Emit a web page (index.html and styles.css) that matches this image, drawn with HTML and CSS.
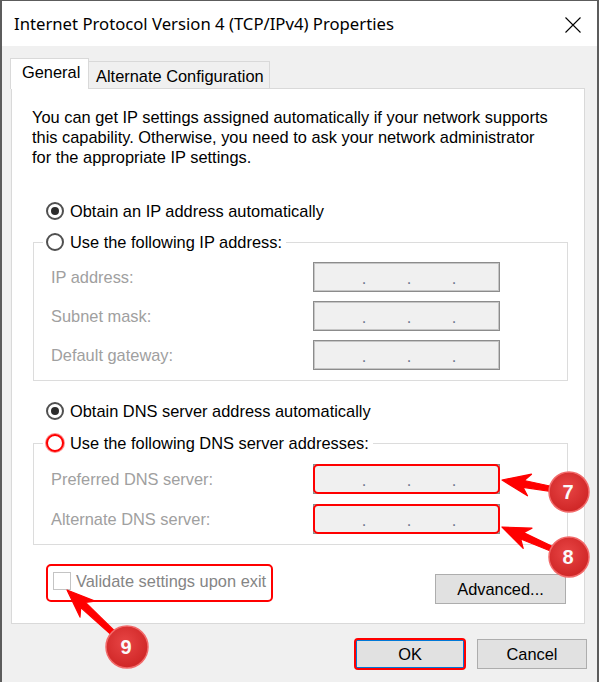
FILE: index.html
```html
<!DOCTYPE html>
<html lang="en">
<head>
  <meta charset="UTF-8" />
  <meta name="viewport" content="width=device-width, initial-scale=1.0" />
  <title>Internet Protocol Version 4 (TCP/IPv4) Properties</title>
  <link rel="stylesheet" href="styles.css">
</head>
<body>
  <div class="window">
    <header class="titlebar">
      <span class="title">Internet Protocol Version 4 (TCP/IPv4) Properties</span>
      <svg class="close" width="16" height="16" viewBox="0 0 16 16">
        <path d="M0.5 0.5L15.5 15.5M15.5 0.5L0.5 15.5" stroke="#000" stroke-width="1.1" fill="none" />
      </svg>
    </header>

    <div class="dialog">
      <div class="tabs">
        <div class="tab active">General</div>
        <div class="tab">Alternate Configuration</div>
      </div>

      <div class="panel">
        <p class="intro">You can get IP settings assigned automatically if your network supports<br>this capability. Otherwise, you need to ask your network administrator<br>for the appropriate IP settings.</p>

        <label class="option first"><span class="radio checked"></span>Obtain an IP address automatically</label>

        <fieldset class="group">
          <legend class="option"><span class="radio"></span>Use the following IP address:</legend>
          <div class="field"><span class="field-label">IP address:</span><span class="ip"><i>.</i><i>.</i><i>.</i></span></div>
          <div class="field"><span class="field-label">Subnet mask:</span><span class="ip"><i>.</i><i>.</i><i>.</i></span></div>
          <div class="field"><span class="field-label">Default gateway:</span><span class="ip"><i>.</i><i>.</i><i>.</i></span></div>
        </fieldset>

        <label class="option second"><span class="radio checked"></span>Obtain DNS server address automatically</label>

        <fieldset class="group dns">
          <legend class="option"><span class="radio flagged"></span>Use the following DNS server addresses:</legend>
          <div class="field"><span class="field-label">Preferred DNS server:</span><span class="ip mark"><i>.</i><i>.</i><i>.</i></span></div>
          <div class="field"><span class="field-label">Alternate DNS server:</span><span class="ip mark"><i>.</i><i>.</i><i>.</i></span></div>
        </fieldset>

        <div class="panel-foot">
          <label class="check mark"><span class="box"></span>Validate settings upon exit</label>
          <button class="btn advanced">Advanced...</button>
        </div>
      </div>

      <div class="actions">
        <button class="btn default mark">OK</button>
        <button class="btn">Cancel</button>
      </div>
    </div>
  </div>

  <!-- callouts drawn over the dialog -->
  <svg class="notes" width="599" height="682" viewBox="0 0 599 682">
    <defs>
      <radialGradient id="bubble" cx="45%" cy="40%" r="60%">
        <stop offset="0" stop-color="#e84545" />
        <stop offset="1" stop-color="#cf2626" />
      </radialGradient>
    </defs>
    <polygon class="arrow" points="502,480 531.5,474.2 524.2,480.5 568.4,490 567.6,494 523,487.3 527.5,495.8" />
    <polygon class="arrow" points="502,527 532,528.2 523.5,532.6 568.8,554.2 567.2,557.8 520.7,539 523.2,548.4" />
    <polygon class="arrow" points="67,590 95,601.1 85.5,602.4 128.4,644.5 125.6,647.5 80.7,607.6 80,617.1" />
    <circle class="bubble" cx="569" cy="492" r="20" />
    <circle class="bubble" cx="569" cy="557" r="20" />
    <circle class="bubble" cx="127" cy="647" r="21" />
    <text class="num" x="568" y="499">7</text>
    <text class="num" x="568" y="564">8</text>
    <text class="num" x="126" y="654">9</text>
  </svg>
</body>
</html>
```

FILE: styles.css
```css
* {
  box-sizing: border-box;
  margin: 0;
  padding: 0;
}
body {
  font-family: "Liberation Sans", Arial, sans-serif;
  font-size: 16.4px;
  line-height: 20px;
  color: #000;
  background: #f0f0f0;
}
.window {
  width: 599px;
  height: 682px;
  border: 2px solid #5c5c5c;
  border-top-width: 1px;
  border-bottom: none;
  background: #f0f0f0;
  overflow: hidden;
}
.titlebar {
  height: 45px;
  background: #fff;
  display: flex;
  align-items: center;
  justify-content: space-between;
  padding: 0 16px 0 12px;
}
.title {
  font-family: "Noto Sans", sans-serif;
  font-size: 16.7px;
}
.close {
  margin-top: 2px;
}
.dialog {
  padding: 12px 12px 0 9px;
}
.tabs {
  display: flex;
  align-items: flex-end;
  height: 31px;
  margin: 0 0 -1px -1px;
  position: relative;
  z-index: 1;
}
.tab {
  width: 181px;
  height: 27px;
  margin-bottom: 1px;
  padding: 4px 0 0 7px;
  border: 1px solid #d9d9d9;
  border-left: none;
  border-bottom: none;
  background: #f0f0f0;
  white-space: nowrap;
}
.tab.active {
  width: 79px;
  height: 31px;
  margin-bottom: 0;
  padding: 3px 0 0 11px;
  border-left: 1px solid #d9d9d9;
  background: #fff;
}
.panel {
  height: 536px;
  background: #fff;
  border: 1px solid #d9d9d9;
}
.intro {
  padding: 18px 0 0 20px;
  white-space: nowrap;
}
.option {
  display: flex;
  align-items: center;
  height: 20px;
  white-space: nowrap;
}
.option.first {
  margin: 34px 0 0 34px;
}
.option.second {
  margin: 20px 0 0 34px;
}
.radio {
  width: 18px;
  height: 18px;
  margin-right: 6px;
  border: 2px solid #505050;
  border-radius: 50%;
  background: #fff;
  display: flex;
  align-items: center;
  justify-content: center;
}
.radio.checked::after {
  content: "";
  width: 8px;
  height: 8px;
  border-radius: 50%;
  background: #2b2b2b;
}
.radio.flagged {
  border-color: #f00;
  box-shadow: 0 0 0 1px rgba(255, 0, 0, 0.45);
}
.group {
  width: 535px;
  margin: 11px 0 0 21px;
  padding: 0 0 10px 17px;
  border: 1px solid #dcdcdc;
}
.group legend {
  margin-left: -8px;
  padding: 0 4px 0 3px;
}
.group.dns {
  margin-top: 12px;
}
.field {
  display: flex;
  align-items: center;
  height: 30px;
  margin-top: 9px;
  color: #a0a0a0;
}
.group legend + .field {
  margin-top: 10px;
}
.group.dns .field {
  margin-top: 10px;
}
.group.dns legend + .field {
  margin-top: 11px;
}
.field-label {
  width: 262px;
}
.ip {
  width: 187px;
  height: 30px;
  display: flex;
  gap: 39px;
  padding: 5px 0 0 47px;
  border: 1px solid #8c8c8c;
  box-shadow: inset 0 0 0 1px #c6c6c6;
  background: #f0f0f0;
  color: #6e7a8e;
}
.ip i {
  width: 6px;
  font-style: normal;
  text-align: center;
}
.mark {
  position: relative;
}
.mark::after {
  content: "";
  position: absolute;
  inset: -1px;
  border: 2px solid #f00;
  border-radius: 5px;
}
.panel-foot {
  display: flex;
  justify-content: space-between;
  align-items: flex-start;
  margin-top: 26px;
  padding: 0 18px 0 41px;
}
.check {
  display: flex;
  align-items: center;
  height: 20px;
  color: #858585;
}
.check::after {
  inset: -7px -7px -11px -7px;
}
.box {
  width: 18px;
  height: 18px;
  margin-right: 5px;
  border: 1px solid #c4c4c4;
  background: #fff;
}
.btn {
  height: 30px;
  font: inherit;
  color: #000;
  background: #e1e1e1;
  border: 1px solid #adadad;
}
.btn.advanced {
  width: 131px;
  margin-top: 3px;
}
.actions {
  display: flex;
  justify-content: flex-end;
  gap: 12px;
  margin: 15px -2px 0 0;
}
.actions .btn {
  width: 110px;
}
.btn.default {
  border: 2px solid #0078d7;
}
.btn.default::after {
  inset: -3px;
  border-radius: 4px;
}
.notes {
  position: absolute;
  top: 0;
  left: 0;
  z-index: 2;
  pointer-events: none;
}
.arrow {
  fill: #f00;
  stroke: #f00;
  stroke-width: 1.2;
  stroke-linejoin: round;
}
.bubble {
  fill: url(#bubble);
  stroke: #f26a6a;
  stroke-width: 1.5;
}
.num {
  font-family: "Liberation Sans", Arial, sans-serif;
  font-weight: bold;
  font-size: 20px;
  fill: #fafafa;
  text-anchor: middle;
}
```
